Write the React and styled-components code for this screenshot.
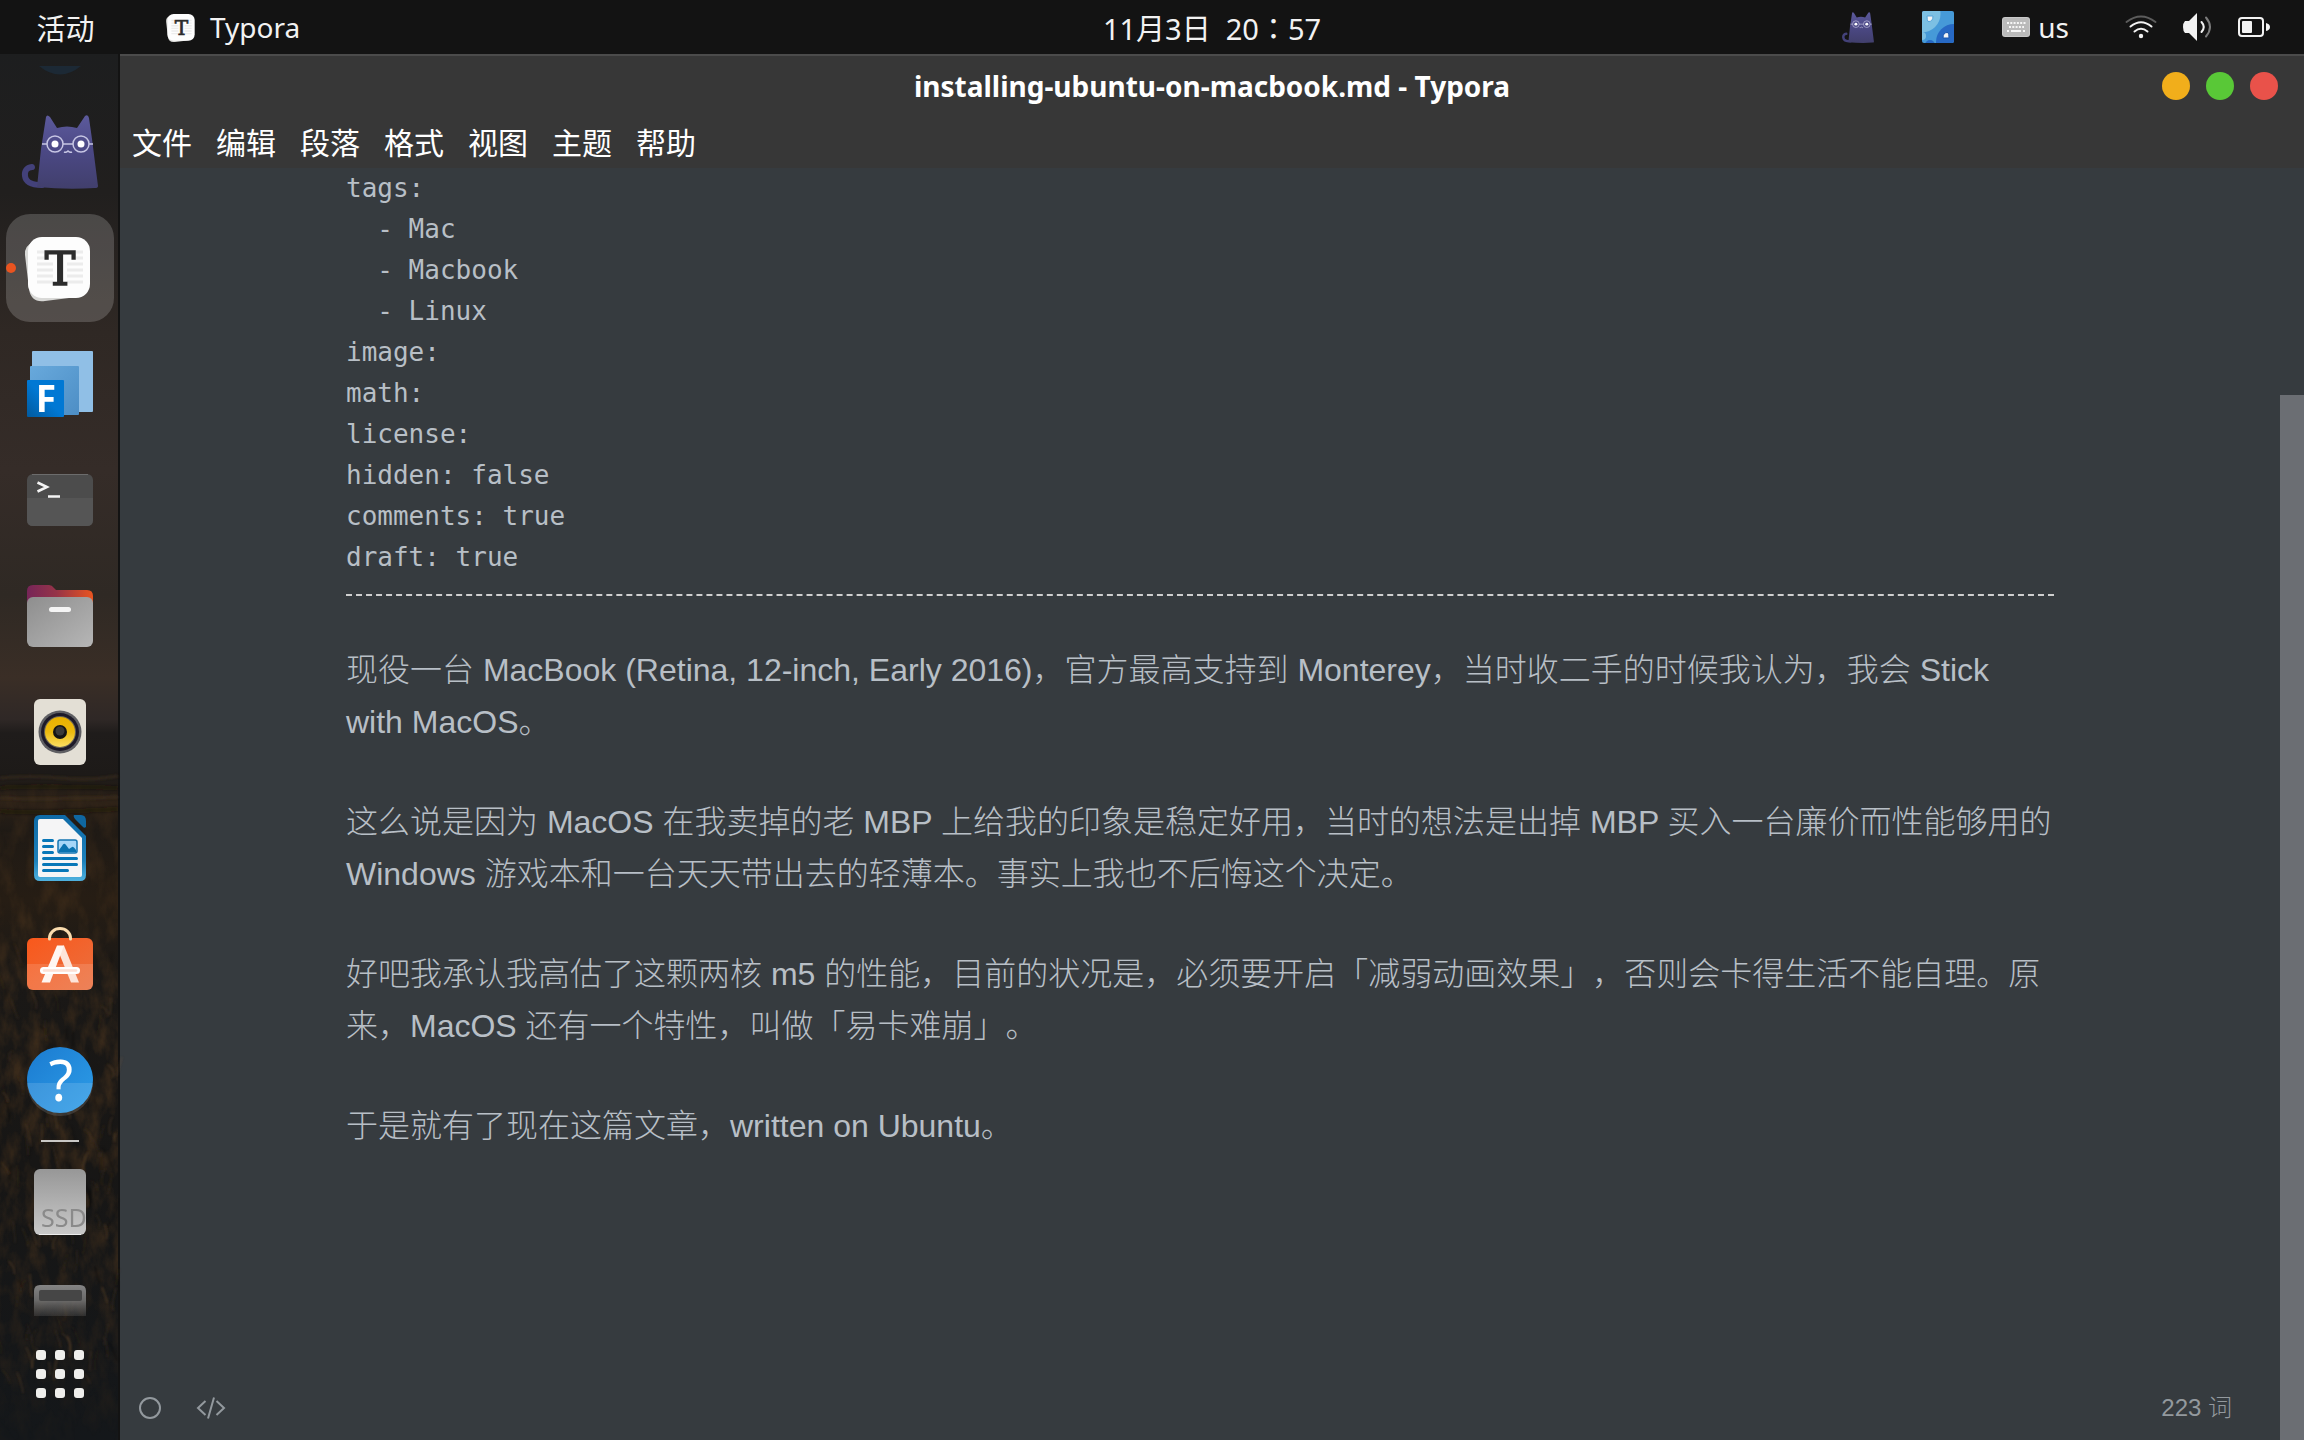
import React from "react";
import styled, { createGlobalStyle } from "styled-components";

const uiFont = `"Noto Sans", "Noto Sans CJK SC", sans-serif`;

const GlobalStyle = createGlobalStyle`
  * { box-sizing: border-box; }
  html, body, #root { height: 100%; }
  body { margin: 0; background: #131313; overflow: hidden; }
  button { border: 0; padding: 0; background: none; color: inherit; font: inherit; }
  svg { display: block; flex: none; overflow: visible; }
`;

const Desktop = styled.div`
  height: 100%;
  display: flex;
  flex-direction: column;
  font-family: ${uiFont};
  font-size: 28px;
  color: #fff;
`;

const TopBar = styled.header`
  flex: none;
  height: 54px;
  display: flex;
  align-items: center;
  background: #131313;
  color: #f2f2f2;
  line-height: 40px;
`;

const Activities = styled.button`
  width: 120px;
  padding: 3px 0 0 11px;
  font-size: 29px;
  white-space: nowrap;
`;

const BarGrid = styled.div`
  flex: 1;
  display: grid;
  grid-template-columns: 1fr auto 1fr;
  align-items: center;
`;

const AppMenu = styled.button`
  justify-self: start;
  display: flex;
  align-items: center;
  gap: 14px;
  padding-left: 47px;
`;

const Clock = styled.button`
  padding-top: 3px;
  font-family: "Noto Sans", "Noto Sans CJK TC", sans-serif;
  font-size: 29px;
  white-space: pre;
`;

const Tray = styled.div`
  justify-self: end;
  display: flex;
  align-items: center;
  gap: 48px;
  padding-right: 33px;
`;

const TrayButton = styled.button`
  display: flex;
  align-items: center;
  gap: 8px;
`;

const SystemMenu = styled(TrayButton)`
  gap: 26px;
  margin-left: 8px;
`;

const Workspace = styled.div`
  flex: 1;
  min-height: 0;
  display: flex;
`;

const DockPanel = styled.nav`
  flex: none;
  width: 120px;
  position: relative;
  display: flex;
  flex-direction: column;
  align-items: center;
  border-right: 2px solid #131313;
  background: linear-gradient(
    180deg,
    #1d1e1f 0%,
    #211f1e 10%,
    #2f2824 20%,
    #352c28 30%,
    #2f2924 39%,
    #3a2e26 45%,
    #2f2826 48%,
    #1f1c1b 49%,
    #1d1a18 52%,
    #2a2017 54%,
    #1f1a15 56%,
    #261d14 61%,
    #1a1816 67%,
    #171615 80%,
    #14171a 100%
  );
`;

const Backdrop = styled.svg`
  position: absolute;
  inset: 0;
  width: 100%;
  height: 100%;
`;

const DockList = styled.div`
  position: relative;
  flex: 1;
  min-height: 0;
  width: 100%;
  overflow: hidden;
  padding: 12px 4px 0 6px;
  display: flex;
  flex-direction: column;
  align-items: center;
  gap: 8px;
`;

const ScrolledOff = styled.div`
  flex: none;
  height: 24px;
`;

const DockItem = styled.button`
  flex: none;
  position: relative;
  width: 108px;
  height: 108px;
  display: flex;
  align-items: center;
  justify-content: center;
  border-radius: 24px;
  background: ${(p) => (p.$active ? "rgba(255,255,255,0.18)" : "none")};
`;

const RunningDot = styled.span`
  position: absolute;
  left: 0;
  top: 49px;
  width: 10px;
  height: 10px;
  border-radius: 50%;
  background: #e95420;
`;

const DockRule = styled.hr`
  flex: none;
  width: 38px;
  height: 2px;
  margin: -2px 0;
  border: 0;
  background: #c9c8c6;
`;

const AppsButton = styled(DockItem)`
  margin-bottom: 12px;
  margin-left: 2px;
`;

const DotGrid = styled.span`
  display: grid;
  grid-template-columns: repeat(3, 10px);
  gap: 9px;
`;

const GridDot = styled.span`
  height: 10px;
  border-radius: 3px;
  background: #eeeeec;
`;

const Window = styled.section`
  flex: 1;
  min-width: 0;
  display: flex;
  flex-direction: column;
  border-top: 2px solid #4b4b4b;
  background: #373737;
`;

const TitleBar = styled.div`
  flex: none;
  height: 60px;
  display: grid;
  grid-template-columns: 1fr auto 1fr;
  align-items: center;
`;

const Title = styled.h1`
  grid-column: 2;
  margin: 0;
  font-size: 28px;
  line-height: 40px;
  font-weight: 700;
`;

const WindowControls = styled.div`
  justify-self: end;
  display: flex;
  gap: 16px;
  padding-right: 26px;
`;

const ControlButton = styled.button`
  width: 28px;
  height: 28px;
  border-radius: 50%;
  background: ${(p) => p.$color};
`;

const MenuBar = styled.nav`
  flex: none;
  height: 52px;
  display: flex;
  align-items: center;
  gap: 24px;
  padding: 2px 0 0 12px;
`;

const MenuButton = styled.button`
  font-size: 30px;
  line-height: 40px;
`;

const Body = styled.div`
  flex: 1;
  min-height: 0;
  display: flex;
  background: #363b3f;
  color: #b8bfc6;
`;

const EditorColumn = styled.div`
  flex: 1;
  min-width: 0;
  display: flex;
  flex-direction: column;
`;

const Document = styled.article`
  flex: 1;
  min-height: 0;
  overflow: hidden;
  padding: 0 226px;
`;

const FrontMatter = styled.pre`
  margin: 0;
  padding-bottom: 16px;
  border-bottom: 2px dashed #cfcfcf;
  font-family: "DejaVu Sans Mono", monospace;
  font-size: 26px;
  line-height: 41px;
`;

const Paragraph = styled.p`
  margin: 48px 0;
  font-family: "Liberation Sans", "Noto Sans CJK SC", sans-serif;
  font-size: 32px;
  font-weight: 300;
  line-height: 52px;
  text-spacing-trim: space-all;
`;

const StatusBar = styled.footer`
  flex: none;
  height: 64px;
  display: flex;
  align-items: center;
  gap: 36px;
  padding: 0 48px 0 19px;
  color: #93999e;
`;

const WordCount = styled.button`
  margin-left: auto;
  font-family: "Liberation Sans", "Noto Sans CJK SC", sans-serif;
  font-size: 24px;
  font-weight: 300;
  line-height: 28px;
`;

const ScrollTrack = styled.div`
  flex: none;
  width: 24px;
  padding-top: 227px;
  display: flex;
  flex-direction: column;
`;

const ScrollThumb = styled.div`
  flex: 1;
  background: #6b6e73;
`;

/* Pseudo-random but stable blades of grass for the field in the wallpaper. */
const blades = Array.from({ length: 130 }, (_, i) => {
  const r = (n) => {
    const v = Math.sin(i * 12.9898 + n * 78.233) * 43758.5453;
    return v - Math.floor(v);
  };
  const x = r(1) * 118;
  const y = 900 + r(2) * 440;
  return {
    d: `M${x.toFixed(0)} ${y.toFixed(0)}q${(r(3) * 6 - 3).toFixed(0)} ${(-5 - r(4) * 5).toFixed(0)} ${(r(5) * 14 - 9).toFixed(0)} ${(-9 - r(6) * 14).toFixed(0)}`,
    color: ["#6a4a2a", "#4b3520", "#0f0f0f", "#7a5532"][i % 4],
    opacity: 0.15 + r(7) * 0.3,
  };
});

const Field = () => (
  <Backdrop viewBox="0 0 118 1386" preserveAspectRatio="none" aria-hidden="true">
    <defs>
      <filter id="soft" x="-10%" y="-10%" width="120%" height="120%">
        <feGaussianBlur stdDeviation="0.8" />
      </filter>
      <filter id="grass" x="0" y="0" width="100%" height="100%" colorInterpolationFilters="sRGB">
        <feTurbulence type="fractalNoise" baseFrequency="0.07 0.035" numOctaves="4" seed="7" />
        <feColorMatrix values="0 0 0 0 0.32  0 0 0 0 0.22  0 0 0 0 0.12  1.6 0 0 0 -0.6" />
      </filter>
      <linearGradient id="fade" x1="0" y1="0" x2="0" y2="1">
        <stop offset="0" stopColor="#fff" stopOpacity="0.3" />
        <stop offset=".4" stopColor="#fff" stopOpacity="0.8" />
        <stop offset=".75" stopColor="#fff" stopOpacity="0.6" />
        <stop offset="1" stopColor="#fff" stopOpacity="0.1" />
      </linearGradient>
      <mask id="fieldMask">
        <rect y="730" width="118" height="656" fill="url(#fade)" />
      </mask>
    </defs>
    <g mask="url(#fieldMask)">
      <rect y="730" width="118" height="656" filter="url(#grass)" />
    </g>
    <g filter="url(#soft)" fill="none">
      <path d="M0 724q30-3 60 0t58-2M0 744q30 2 118-1" stroke="#4a3520" strokeWidth="3" opacity=".4" />
      <path d="M0 734q30-3 118 0M0 757q30 3 118-2" stroke="#14120f" strokeWidth="5" opacity=".4" />
      {blades.map((b, i) => (
        <path key={i} d={b.d} stroke={b.color} strokeWidth="1.500" opacity={b.opacity} />
      ))}
    </g>
  </Backdrop>
);

const Cat = ({ width, height, id }) => (
  <svg width={width} height={height} viewBox="0 0 76 74">
    <defs>
      <linearGradient id={id} x1="0" y1="0" x2="0" y2="1">
        <stop offset="0" stopColor="#5c5a9c" />
        <stop offset=".5" stopColor="#4b4884" />
        <stop offset="1" stopColor="#413f6c" />
      </linearGradient>
    </defs>
    <path d="M10 52Q2 53 3 61Q4 70 20 70" fill="none" stroke="#43417a" strokeWidth="6" strokeLinecap="round" />
    <path d="M24 2Q25-1 28 2L35 13Q45 10 55 13L63 1Q66-1 67 3L70 24L76 71Q76 73 73 73Q45 75 15 72L19 34Z" fill={`url(#${id})`} />
    <g fill="none" stroke="#c7c6e4" strokeWidth="1.500">
      <circle cx="33" cy="29" r="8" />
      <circle cx="59" cy="29" r="8" />
      <path d="M20 29H25M41 29H51M67 29H71M42 37q2 1 4-1q2 2 4 1" />
    </g>
    <circle cx="33" cy="29" r="3.500" fill="#fff" />
    <circle cx="59" cy="29" r="3.500" fill="#fff" />
  </svg>
);

const TyporaIcon = ({ size }) => (
  <svg width={size} height={size} viewBox="0 0 66 66">
    <path d="M-2 20Q-3 11 6 7L52 54Q54 61 42 63L18 66Q4 68 2 54Z" fill="#d9d9d7" />
    <rect x="1" y="2" width="62" height="61" rx="14" fill="#fdfdfd" />
    <path d="M10 17H17M49 17H56M10 23H17M49 23H56M10 29H26M40 29H56M10 35H26M40 35H56M10 41H26M40 41H56M10 47H26M40 47H56" stroke="#ececec" strokeWidth="3" />
    <text x="33" y="50" textAnchor="middle" fontFamily="DejaVu Serif, serif" fontSize="46" fill="#2c2c2c" stroke="#2c2c2c" strokeWidth="1.500">T</text>
  </svg>
);

const FluentIcon = () => (
  <svg width="66" height="66" viewBox="0 0 66 66">
    <defs>
      <linearGradient id="fl" x1="0" y1="1" x2="1" y2="0">
        <stop offset="0" stopColor="#025a9e" />
        <stop offset=".5" stopColor="#0078d4" />
      </linearGradient>
      <linearGradient id="fm" x1="0" y1="0" x2="1" y2="1">
        <stop offset="0" stopColor="#68a9dc" />
        <stop offset="1" stopColor="#4d8ec5" />
      </linearGradient>
    </defs>
    <rect x="5" y="0" width="61" height="61" rx="1" fill="#90bfe6" />
    <rect x="3" y="15" width="49" height="49" rx="1" fill="url(#fm)" />
    <rect x="0" y="29" width="37" height="37" rx="1" fill="url(#fl)" />
    <text x="19" y="61" textAnchor="middle" fontFamily="Open Sans, sans-serif" fontSize="37" fontWeight="700" fill="#fff">F</text>
  </svg>
);

const TerminalIcon = () => (
  <svg width="66" height="66" viewBox="0 0 66 66">
    <rect x="0" y="7" width="66" height="52" rx="6" fill="#4c4c4c" />
    <path d="M0 31H66V53Q66 59 60 59H6Q0 59 0 53Z" fill="#555" />
    <path d="M5 7.500H61" stroke="#6c6c6c" />
    <path d="M10.500 15.500L20 20L10.500 24.500" fill="none" stroke="#f4f4f4" strokeWidth="2.500" />
    <path d="M21 29.500H33" stroke="#f4f4f4" strokeWidth="2.500" />
  </svg>
);

const FilesIcon = () => (
  <svg width="66" height="66" viewBox="0 0 66 66">
    <defs>
      <linearGradient id="fo"><stop offset="0" stopColor="#762558" /><stop offset=".45" stopColor="#963448" /><stop offset="1" stopColor="#e95420" /></linearGradient>
      <linearGradient id="fg" x1="0" y1="0" x2="1" y2="1"><stop offset="0" stopColor="#8e8e8e" /><stop offset="1" stopColor="#b6b6b6" /></linearGradient>
    </defs>
    <path d="M0 8Q0 2 6 2H22Q25 2 27 5L29 7H60Q66 7 66 13V24H0Z" fill="url(#fo)" />
    <rect x="0" y="14" width="66" height="50" rx="6" fill="url(#fg)" />
    <rect x="22" y="24" width="22" height="5" rx="2.500" fill="#f5f5f5" />
  </svg>
);

const RhythmboxIcon = () => (
  <svg width="66" height="66" viewBox="0 0 66 66">
    <defs>
      <linearGradient id="ry" x1="0" y1="0" x2="0" y2="1"><stop offset="0" stopColor="#e8b000" /><stop offset=".5" stopColor="#ecb90e" /><stop offset="1" stopColor="#fbdf63" /></linearGradient>
    </defs>
    <rect x="7" y="0" width="52" height="66" rx="6" fill="#e3dfd5" />
    <circle cx="33" cy="33" r="21.500" fill="#5f5f63" />
    <circle cx="33" cy="33" r="19" fill="#1d1a29" />
    <circle cx="33" cy="33" r="16" fill="#6b6555" />
    <circle cx="33" cy="33" r="15" fill="url(#ry)" />
    <circle cx="33" cy="33" r="7" fill="#141414" />
    <circle cx="33" cy="32" r="4.500" fill="#3a3a3a" />
  </svg>
);

const WriterIcon = () => (
  <svg width="66" height="66" viewBox="0 0 66 66">
    <defs>
      <linearGradient id="wr" x1="0" y1="0" x2="0" y2="1"><stop offset="0" stopColor="#0e6aa6" /><stop offset=".7" stopColor="#1d81bb" /><stop offset="1" stopColor="#4fb2df" /></linearGradient>
    </defs>
    <path d="M13 0H38L59 21V60Q59 66 53 66H13Q7 66 7 60V6Q7 0 13 0Z" fill="url(#wr)" />
    <path d="M13 4H36L55 23V60Q55 62 53 62H13Q11 62 11 60V6Q11 4 13 4Z" fill="#f5f5f6" />
    <path d="M47 0H54Q59 0 59 6V12Q57 14 55 11L48 4Q46 1 47 0Z" fill="#0f67a0" />
    <g stroke="#0877b8" strokeWidth="3" strokeLinecap="round">
      <path d="M16.500 25.500H25.500M16.500 31.500H25.500M16.500 37.500H25.500M16.500 43.500H49.500M16.500 49.500H49.500M16.500 55.500H40.500" />
    </g>
    <rect x="31" y="25" width="19" height="13" rx="2" fill="#a5d6f8" stroke="#1576b2" strokeWidth="1.500" />
    <path d="M32 35L35 31Q37 27 39 30L42 34L45 32Q46 31 49 35V37H32Z" fill="#0972b0" />
  </svg>
);

const SoftwareIcon = () => (
  <svg width="66" height="66" viewBox="0 0 66 66">
    <defs>
      <linearGradient id="so" x1="0" y1="0" x2="1" y2="1"><stop offset="0" stopColor="#f9581b" /><stop offset="1" stopColor="#ea7040" /></linearGradient>
    </defs>
    <rect x="0" y="7" width="66" height="52" rx="6" fill="url(#so)" />
    <path d="M0 33H66V53Q66 59 60 59H6Q0 59 0 53Z" fill="#fff" opacity=".13" />
    <path d="M22.500 8V7A10.500 9.500 0 0 1 43.500 7V8" fill="none" stroke="#fbdcae" strokeWidth="3" strokeLinecap="round" />
    <path d="M37 14.500L52 51.500H44L30 17Z" fill="#fde5da" />
    <path d="M30 14.500H37L23 51.500H14.500Z" fill="#fff6f1" />
    <rect x="13" y="36" width="40" height="7" rx="3.500" fill="#fff" />
    <path d="M17 39.500H49" stroke="#fde0d4" strokeWidth="2.500" strokeLinecap="round" />
  </svg>
);

const HelpIcon = () => (
  <svg width="66" height="66" viewBox="0 0 66 66">
    <defs>
      <linearGradient id="he" x1="0" y1="0" x2="1" y2="1"><stop offset="0" stopColor="#1b7bd0" /><stop offset="1" stopColor="#2d9de8" /></linearGradient>
    </defs>
    <circle cx="33" cy="33" r="33" fill="url(#he)" />
    <path d="M0 36H66A33 33 0 0 1 0 36Z" fill="#fff" opacity=".13" />
    <text x="34" y="54" textAnchor="middle" fontFamily="Noto Sans, sans-serif" fontSize="56" fill="#fff">?</text>
  </svg>
);

const SsdIcon = () => (
  <svg width="66" height="66" viewBox="0 0 66 66">
    <defs>
      <linearGradient id="sd" x1="0" y1="0" x2="0" y2="1"><stop offset="0" stopColor="#979797" /><stop offset="1" stopColor="#c9c9c9" /></linearGradient>
    </defs>
    <rect x="7" y="0" width="52" height="66" rx="6" fill="url(#sd)" />
    <path d="M12 65.500H54" stroke="#ededed" />
    <text x="14" y="58" fontFamily="Noto Sans, sans-serif" fontSize="25" fill="#8a8a8a">SSD</text>
  </svg>
);

const DriveIcon = () => (
  <svg width="66" height="66" viewBox="0 0 66 66">
    <defs>
      <linearGradient id="dr" x1="0" y1="0" x2="0" y2="1">
        <stop offset="0" stopColor="#858585" />
        <stop offset=".5" stopColor="#777" stopOpacity=".85" />
        <stop offset="1" stopColor="#666" stopOpacity=".3" />
      </linearGradient>
    </defs>
    <path d="M7 31V6Q7 0 13 0H53Q59 0 59 6V31Z" fill="url(#dr)" />
    <rect x="12" y="5" width="43" height="11" rx="2" fill="#464646" />
  </svg>
);

const BlobIcon = () => (
  <svg width="32" height="32" viewBox="0 0 32 32">
    <defs><clipPath id="bl"><rect width="32" height="32" rx="2" /></clipPath></defs>
    <g clipPath="url(#bl)">
      <rect width="32" height="32" fill="#469ad8" />
      <circle cx="0" cy="3" r="18.500" fill="#7cc0e3" />
      <circle cx="32" cy="31" r="18" fill="#2769c4" />
      <circle cx="0" cy="25" r="4" fill="#7cc0e3" />
      <circle cx="8" cy="34" r="5" fill="#2769c4" />
    </g>
    <path d="M5 5H11Q11 11 6 10.500Q5 9 5 5Z" fill="#f5f5f5" stroke="#56a5da" />
    <path d="M27 27H21Q21 21 26 21.500Q27 23 27 27Z" fill="#f5f5f5" stroke="#1b57ae" />
  </svg>
);

const KeyboardIcon = () => (
  <svg width="28" height="20" viewBox="0 0 28 20">
    <rect width="28" height="20" rx="3" fill="#c9c9c9" />
    <rect x="1" y="1" width="26" height="18" rx="2" fill="#bababa" />
    <g stroke="#f6f6f6" strokeWidth="2">
      <path d="M5 6H24" strokeDasharray="2 1.300" />
      <path d="M7 10H22" strokeDasharray="2 1.300" />
      <path d="M5 14H7M9 14H19M21 14H23" />
    </g>
  </svg>
);

const WifiIcon = () => (
  <svg width="32" height="24" viewBox="0 0 32 24" fill="none" strokeLinecap="round" strokeWidth="2">
    <path d="M1.500 7Q16-4 30.500 7" stroke="#5c5c5c" />
    <path d="M5.500 11.500Q16 3 26.500 11.500M9.500 16.500Q16 11 22.500 16.500" stroke="#f2f2f2" />
    <circle cx="16" cy="21" r="2.200" fill="#f2f2f2" />
  </svg>
);

const SpeakerIcon = () => (
  <svg width="29" height="28" viewBox="0 0 29 28" fill="none" strokeLinecap="round" strokeWidth="2">
    <path d="M2 8H6L14 0V28L6 20H2Q0 18 0 14T2 8Z" fill="#f2f2f2" />
    <path d="M18.500 9Q23 14 18.500 19" stroke="#f2f2f2" />
    <path d="M23 4.500Q31 14 23 23.500" stroke="#7b7b7b" />
  </svg>
);

const BatteryIcon = () => (
  <svg width="33" height="20" viewBox="0 0 33 20">
    <rect x="1" y="1" width="24" height="18" rx="3" fill="none" stroke="#f2f2f2" strokeWidth="2" />
    <rect x="4" y="4" width="10" height="12" rx="1" fill="#f2f2f2" />
    <path d="M28 6Q32 7 32 10T28 14Z" fill="#f2f2f2" />
  </svg>
);

const CircleIcon = () => (
  <svg width="22" height="22" viewBox="0 0 22 22">
    <circle cx="11" cy="11" r="10" fill="none" stroke="currentColor" strokeWidth="2" />
  </svg>
);

const CodeIcon = () => (
  <svg width="28" height="22" viewBox="0 0 28 22" fill="none" stroke="currentColor" strokeWidth="2">
    <path d="M8.500 4L1 11L8.500 18M19.500 4L27 11L19.500 18M17 0.500L11 21.500" />
  </svg>
);

const dockApps = [
  { name: "Cat", icon: <Cat width={76} height={74} id="catLarge" /> },
  { name: "Typora", icon: <TyporaIcon size={66} />, active: true },
  { name: "Fluent", icon: <FluentIcon /> },
  { name: "Terminal", icon: <TerminalIcon /> },
  { name: "Files", icon: <FilesIcon /> },
  { name: "Rhythmbox", icon: <RhythmboxIcon /> },
  { name: "Writer", icon: <WriterIcon /> },
  { name: "Software", icon: <SoftwareIcon /> },
  { name: "Help", icon: <HelpIcon /> },
];

const drives = [
  { name: "SSD", icon: <SsdIcon /> },
  { name: "Drive", icon: <DriveIcon /> },
];

const menus = ["文件", "编辑", "段落", "格式", "视图", "主题", "帮助"];

const controls = [
  { label: "Minimize", color: "#f1ae1b" },
  { label: "Maximize", color: "#59c837" },
  { label: "Close", color: "#e9524a" },
];

const frontMatter = `tags:
  - Mac
  - Macbook
  - Linux
image:
math:
license:
hidden: false
comments: true
draft: true`;

const paragraphs = [
  "现役一台 MacBook (Retina, 12-inch, Early 2016)，官方最高支持到 Monterey，当时收二手的时候我认为，我会 Stick with MacOS。",
  "这么说是因为 MacOS 在我卖掉的老 MBP 上给我的印象是稳定好用，当时的想法是出掉 MBP 买入一台廉价而性能够用的 Windows 游戏本和一台天天带出去的轻薄本。事实上我也不后悔这个决定。",
  "好吧我承认我高估了这颗两核 m5 的性能，目前的状况是，必须要开启「减弱动画效果」，否则会卡得生活不能自理。原来，MacOS 还有一个特性，叫做「易卡难崩」。",
  "于是就有了现在这篇文章，written on Ubuntu。",
];

const Dock = () => (
  <DockPanel>
    <Field />
    <DockList>
      <ScrolledOff>
        <svg width="42" height="9" viewBox="0 0 42 9">
          <path d="M0 0H42Q21 17 0 0Z" fill="#1c2935" />
        </svg>
      </ScrolledOff>
      {dockApps.map((app) => (
        <DockItem key={app.name} $active={app.active} aria-label={app.name}>
          {app.active && <RunningDot />}
          {app.icon}
        </DockItem>
      ))}
      <DockRule />
      {drives.map((drive) => (
        <DockItem key={drive.name} aria-label={drive.name}>
          {drive.icon}
        </DockItem>
      ))}
    </DockList>
    <AppsButton aria-label="Applications">
      <DotGrid>
        {Array.from({ length: 9 }, (_, i) => (
          <GridDot key={i} />
        ))}
      </DotGrid>
    </AppsButton>
  </DockPanel>
);

export default function App() {
  return (
    <Desktop>
      <GlobalStyle />
      <TopBar>
        <Activities>活动</Activities>
        <BarGrid>
          <AppMenu>
            <TyporaIcon size={29} />
            Typora
          </AppMenu>
          <Clock>11月3日  20：57</Clock>
          <Tray>
            <TrayButton aria-label="Cat"><Cat width={32} height={31} id="catSmall" /></TrayButton>
            <TrayButton aria-label="Clipboard"><BlobIcon /></TrayButton>
            <TrayButton><KeyboardIcon />us</TrayButton>
            <SystemMenu aria-label="System">
              <WifiIcon />
              <SpeakerIcon />
              <BatteryIcon />
            </SystemMenu>
          </Tray>
        </BarGrid>
      </TopBar>
      <Workspace>
        <Dock />
        <Window>
          <TitleBar>
            <Title>installing-ubuntu-on-macbook.md - Typora</Title>
            <WindowControls>
              {controls.map((c) => (
                <ControlButton key={c.label} $color={c.color} aria-label={c.label} />
              ))}
            </WindowControls>
          </TitleBar>
          <MenuBar>
            {menus.map((m) => (
              <MenuButton key={m}>{m}</MenuButton>
            ))}
          </MenuBar>
          <Body>
            <EditorColumn>
              <Document>
                <FrontMatter>{frontMatter}</FrontMatter>
                {paragraphs.map((text) => (
                  <Paragraph key={text}>{text}</Paragraph>
                ))}
              </Document>
              <StatusBar>
                <button aria-label="Sidebar"><CircleIcon /></button>
                <button aria-label="Source mode"><CodeIcon /></button>
                <WordCount>223 词</WordCount>
              </StatusBar>
            </EditorColumn>
            <ScrollTrack>
              <ScrollThumb />
            </ScrollTrack>
          </Body>
        </Window>
      </Workspace>
    </Desktop>
  );
}
